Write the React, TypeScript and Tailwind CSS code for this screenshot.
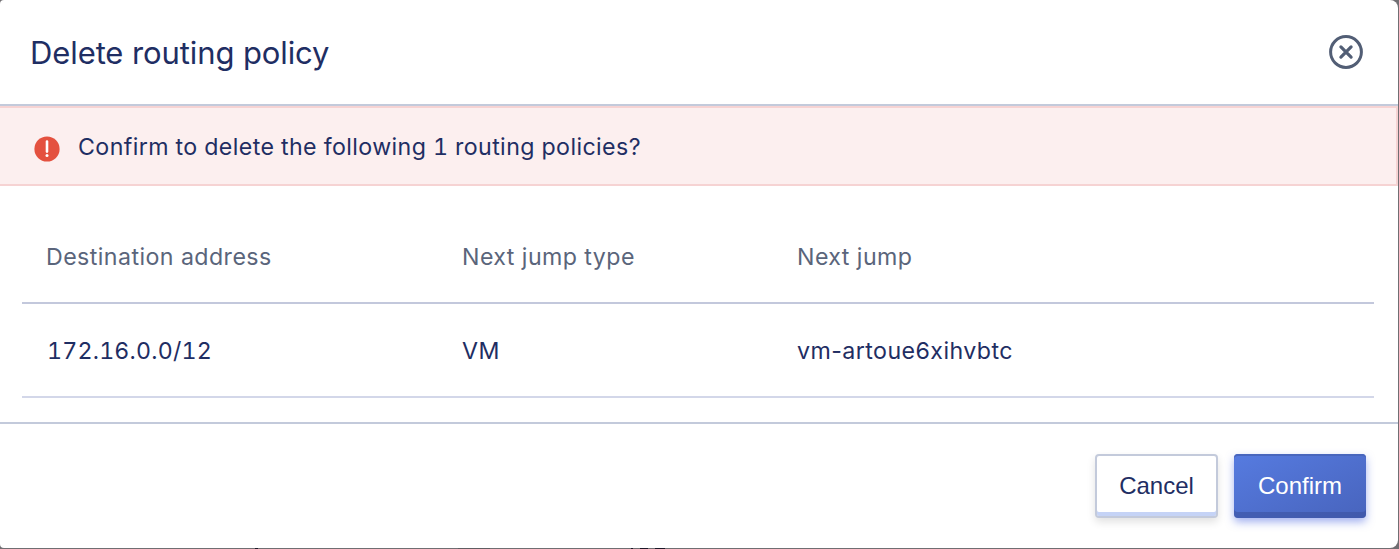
const columns = ['Destination address', 'Next jump type', 'Next jump'];
const rows = [['172.16.0.0/12', 'VM', 'vm-artoue6xihvbtc']];

function CloseIcon() {
  return (
    <svg width="36" height="36" viewBox="0 0 36 36" fill="none" stroke="#525e75">
      <circle cx="18" cy="18" r="15.4" strokeWidth="3" />
      <path d="M12.9 12.9l10.2 10.2M23.1 12.9L12.9 23.1" strokeWidth="3.2" strokeLinecap="round" />
    </svg>
  );
}

function AlertIcon() {
  return (
    <svg width="26" height="26" viewBox="0 0 26 26">
      <circle cx="13" cy="13" r="12.6" fill="#e4513f" />
      <path d="M13 5.6v10" stroke="#fff" strokeWidth="2.6" strokeLinecap="round" />
      <circle cx="13" cy="19.4" r="1.5" fill="#fff" />
    </svg>
  );
}

export default function App() {
  return (
    <div className="h-[549px] w-[1399px] overflow-hidden bg-[#706e72] font-['Inter','Liberation_Sans',sans-serif] text-[#1f2e63]">
      <section className="flex h-[548px] w-[1398px] flex-col overflow-hidden rounded-l-[4px] rounded-r-[8px] bg-white">
        <header className="flex h-[106px] items-center justify-between border-b-2 border-[#c3cadb] pr-[34px] pl-[30px]">
          <h1 className="pt-[2px] text-[31px] leading-10 tracking-[-0.1px]">Delete routing policy</h1>
          <button type="button" aria-label="Close">
            <CloseIcon />
          </button>
        </header>
        <div className="flex h-20 items-center border-y-2 border-r-2 border-[#f6d3d3] bg-[#fcefef] pl-[34px]">
          <span className="mt-[5px]">
            <AlertIcon />
          </span>
          <p className="ml-[18px] pt-0.5 text-[23.2px] leading-8 tracking-[0.4px] tabular-nums">
            Confirm to delete the following 1 routing policies?
          </p>
        </div>
        <div className="h-[236px] px-[22px] pt-[25px]">
          <table className="w-[1352px] table-fixed border-collapse text-left text-[23.2px] leading-8 tracking-[0.43px]">
            <colgroup>
              <col className="w-[416px]" />
              <col className="w-[335px]" />
              <col />
            </colgroup>
            <thead>
              <tr className="h-[92px] border-b-2 border-[#c3c8dc] text-[#5a657b]">
                {columns.map((c) => (
                  <th key={c} className="p-0 pl-6 font-normal">{c}</th>
                ))}
              </tr>
            </thead>
            <tbody>
              {rows.map(([address, type, target]) => (
                <tr key={address} className="h-[94px] border-b-2 border-[#d3d7e9]">
                  <td className="p-0 pt-0.5 pl-[25px] tracking-[0.2px] tabular-nums">{address}</td>
                  <td className="p-0 pt-0.5 pl-6">{type}</td>
                  <td className="p-0 pt-0.5 pl-6">{target}</td>
                </tr>
              ))}
            </tbody>
          </table>
        </div>
        <footer className="flex flex-1 items-start justify-end gap-4 border-t-2 border-[#c3cadb] pt-[30px] pr-8 font-['Liberation_Sans',Arial,sans-serif] text-2xl">
          <button type="button" className="h-16 w-[123px] rounded-[4px] border-2 border-[#c3cadb] bg-white shadow-[inset_0_-4px_0_#c5d3f6,0_4px_8px_rgba(0,0,0,0.12)]">
            Cancel
          </button>
          <button type="button" className="h-16 w-[132px] rounded-[4px] bg-linear-to-br from-[#567be0] to-[#4864bd] text-white shadow-[inset_0_2px_0_#4866bd,inset_0_-6px_0_rgba(60,82,160,0.6),0_4px_8px_rgba(72,100,225,0.5)]">
            Confirm
          </button>
        </footer>
      </section>
      <div aria-hidden="true" className="flex h-px">
        <i className="ml-[255px] w-[3px] bg-[#1c1828]" />
        <i className="ml-[200px] w-8 bg-[#605e62]" />
        <i className="ml-[141px] w-[2px] bg-[#1c1828]" />
        <i className="ml-[7px] w-2 bg-[#1c1828]" />
        <i className="ml-[7px] w-2.5 bg-[#1c1828]" />
      </div>
    </div>
  );
}
